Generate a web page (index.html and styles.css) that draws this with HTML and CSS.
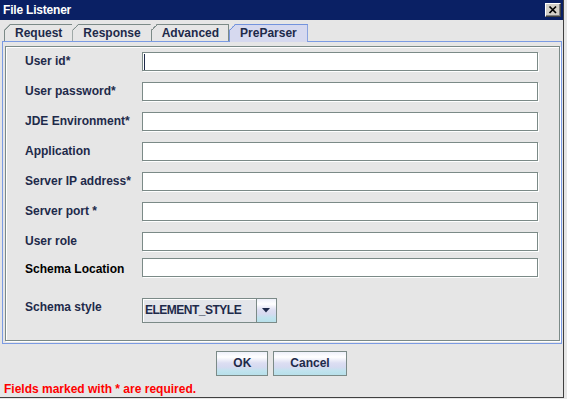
FILE: index.html
```html
<!DOCTYPE html>
<html>
<head>
<meta charset="utf-8">
<title>File Listener</title>
<link rel="stylesheet" href="styles.css">
</head>
<body>
<div class="window">
  <div class="titlebar">
    <span class="title">File Listener</span>
    <span class="close"><svg width="14" height="12" viewBox="0 0 14 12"><path d="M3.5 2.5 L10 9 M10 2.5 L3.5 9" stroke="#000" stroke-width="1.7" fill="none"/></svg></span>
  </div>
  <div class="tabs">
    <div class="tab">Request</div>
    <div class="tab">Response</div>
    <div class="tab before-sel">Advanced</div>
    <div class="tab selected">PreParser</div>
  </div>
  <div class="panel">
    <div class="etched">
      <div class="row"><span class="label">User id*</span><div class="field"><span class="caret"></span></div></div>
      <div class="row"><span class="label">User password*</span><div class="field"></div></div>
      <div class="row"><span class="label">JDE Environment*</span><div class="field"></div></div>
      <div class="row"><span class="label">Application</span><div class="field"></div></div>
      <div class="row"><span class="label">Server IP address*</span><div class="field"></div></div>
      <div class="row"><span class="label">Server port *</span><div class="field"></div></div>
      <div class="row"><span class="label">User role</span><div class="field"></div></div>
      <div class="row loc"><span class="label dark">Schema Location</span><div class="field"></div></div>
      <div class="row style"><span class="label">Schema style</span>
        <div class="combo">
          <span class="combo-value">ELEMENT_STYLE</span>
          <span class="combo-arrow"><svg width="8" height="5" viewBox="0 0 8 5"><path d="M0 0 H8 L4 4.5 Z" fill="#1e2a4a"/></svg></span>
        </div>
      </div>
    </div>
  </div>
  <div class="actions">
    <button class="btn">OK</button>
    <button class="btn">Cancel</button>
  </div>
  <div class="note">Fields marked with * are required.</div>
</div>
</body>
</html>
```

FILE: styles.css
```css
* { box-sizing: border-box; }

body {
  margin: 0;
  background: #e6e6e6;
  font-family: "Liberation Sans", Arial, sans-serif;
  font-size: 12px;
  font-weight: bold;
}

.window {
  width: 564px;
  height: 398px;
  border-right: 1px solid #404040;
  border-bottom: 1px solid #404040;
  background: #e6e6e6;
  display: flex;
  flex-direction: column;
}

.titlebar {
  height: 20px;
  flex-shrink: 0;
  background: #0a2064;
  color: #fff;
  display: flex;
  align-items: center;
  justify-content: space-between;
  padding: 0 2px 0 3px;
}

.title {
  font-size: 12px;
  line-height: 19px;
  padding-top: 1px;
  letter-spacing: -0.2px;
}

.close {
  width: 16px;
  height: 14px;
  background: #d4d0c8;
  border: 1px solid;
  border-color: #fff #404040 #404040 #fff;
  box-shadow: inset -1px -1px 0 #808080;
  display: flex;
  align-items: center;
  justify-content: center;
}

.tabs {
  display: flex;
  align-items: flex-start;
  height: 17px;
  margin: 4px 0 0 4px;
  position: relative;
  z-index: 1;
  flex-shrink: 0;
}

.tab {
  height: 17px;
  padding: 0 10px;
  line-height: 16px;
  color: #1e2a4a;
  border-left: 1px solid #7b8a87;
  border-top: 1px solid #7b8a87;
  clip-path: polygon(0 6px, 6px 0, 100% 0, 100% 100%, 0 100%);
  background:
    linear-gradient(to bottom right, transparent 50%, #7b8a87 50%, #7b8a87 calc(50% + 1.2px), transparent calc(50% + 1.2px)) 0 0 / 6px 6px no-repeat border-box,
    #e6e6e6;
}

.tab.before-sel {
  padding-right: 9px;
  border-right: 1px solid #7b8a87;
}

.tab.selected {
  height: 18px;
  padding: 0 10px 0 10px;
  border: 1px solid #7393dc;
  border-bottom: none;
  background:
    linear-gradient(to bottom right, transparent 50%, #7393dc 50%, #7393dc calc(50% + 1.2px), transparent calc(50% + 1.2px)) 0 0 / 6px 6px no-repeat border-box,
    #d6d9ef;
}

.panel {
  margin-left: 2px;
  width: 560px;
  height: 303px;
  flex-shrink: 0;
  border: 1px solid #7b9be3;
  padding: 4px 1px 2px 2px;
}

.etched {
  height: 100%;
  border: 1px solid #7b8a87;
  box-shadow: 1px 1px 0 #fff, inset 1px 1px 0 #fff;
  padding: 5px 0 0 19px;
}

.row {
  display: flex;
  align-items: flex-start;
  margin-top: 11px;
}

.row:first-child { margin-top: 0; }
.row.loc { margin-top: 7px; }
.row.style { margin-top: 21px; }

.label {
  width: 117px;
  flex-shrink: 0;
  line-height: 18px;
  color: #1e2a4a;
}

.label.dark {
  color: #000;
  height: 19px;
  padding-top: 2px;
}

.field {
  width: 396px;
  height: 19px;
  background: #fff;
  border: 1px solid #7b8a87;
  box-shadow: 1px 1px 0 #fff;
}

.caret {
  display: block;
  width: 1px;
  height: 16px;
  margin: 1px 0 0 1px;
  background: #1e2a4a;
}

.combo {
  display: flex;
  width: 135px;
  height: 25px;
  border: 1px solid #7b8a87;
}

.combo-value {
  flex: 1;
  background: #e3e5e9;
  box-shadow: inset 1px 1px 0 #fff;
  padding-left: 2px;
  line-height: 23px;
  letter-spacing: -0.5px;
  color: #1e2a4a;
}

.combo-arrow {
  width: 20px;
  border-left: 1px solid #7b8a87;
  display: flex;
  align-items: center;
  justify-content: center;
  padding-right: 2px;
  background: linear-gradient(#eef0fa 0%, #ffffff 22%, #dcdef2 48%, #d6daf0 65%, #c0e3ee 82%, #b8e0ea 100%);
}

.actions {
  display: flex;
  justify-content: center;
  gap: 5px;
  margin-top: 7px;
}

.btn {
  height: 25px;
  padding: 0 16px;
  border: 1px solid #7b8a87;
  font: inherit;
  line-height: 23px;
  color: #1e2a4a;
  background: linear-gradient(#eef0fa 0%, #ffffff 22%, #dcdef2 48%, #d6daf0 65%, #c0e3ee 82%, #b8e0ea 100%);
}

.note {
  margin-top: 6px;
  padding-left: 4px;
  line-height: 15px;
  color: #ff0000;
}
```
